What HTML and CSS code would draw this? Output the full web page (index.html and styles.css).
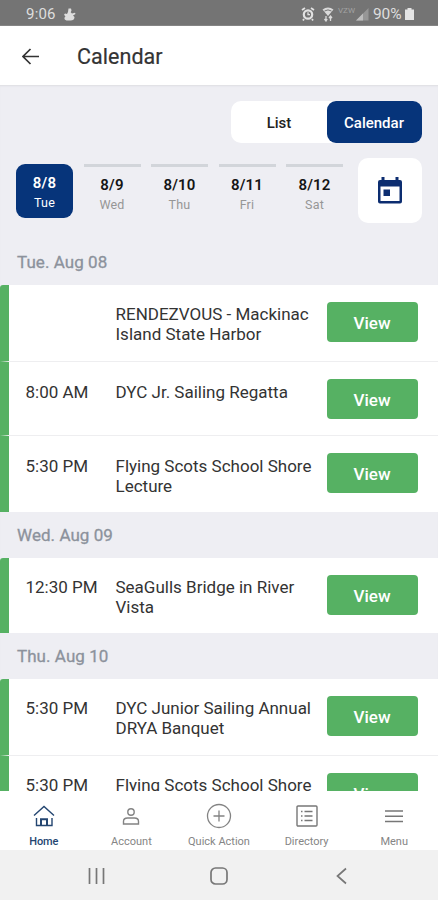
FILE: index.html
```html
<!DOCTYPE html>
<html lang="en">
<head>
<meta charset="utf-8">
<title>Calendar</title>
<link rel="stylesheet" href="styles.css">
</head>
<body>
<div class="status">
  <span class="clock">9:06</span>
  <svg class="snow" width="13" height="13" viewBox="0 0 13 13"><path d="M5.500 0.500h2.500l.5 2-.8 1.800 1.300 1.200 3-.8.5 1.200-2.500 1.600 1.500 1.500c0 2.500-1.500 3.500-4 3.500H4.500C1.500 12.500.5 10 2.500 8.500L1 6.800l1-1.300 2 .5 1-2z" fill="#dedede"/></svg>
  <div class="signals">
    <svg width="14" height="14" viewBox="0 0 14 14" fill="none" stroke="#e2e2e2"><path d="M1 3l3-2M10 1l3 2M3 12l-1 1.500M11 12l1 1.500" stroke-width="1.800"/><circle cx="7" cy="7.500" r="4.200" stroke-width="2.200"/><path d="M7 5.200v2.500h2" stroke-width="1.300"/></svg>
    <svg class="wifi" width="12" height="15" viewBox="0 0 12 15"><path d="M0.500 2.500Q6-1.500 11.500 2.500L6 9z" fill="#dadada"/><path d="M2.500 4Q6 1.800 9.500 4" fill="none" stroke="#777"/><path d="M4 9v5M2.500 12L4 14l1.200-2M8.500 14V9M7 11l1.500-2L10 11" fill="none" stroke="#dadada" stroke-width="1.300"/></svg>
    <span class="carrier">VZW</span>
    <svg class="bars" width="13" height="13" viewBox="0 0 13 13"><path d="M12.500 0v12.500H0z" fill="#969696"/><path d="M7 5.500v7H0z" fill="#bdbdbd"/></svg>
    <span class="pct">90%</span>
    <svg width="9" height="12" viewBox="0 0 9 12"><path d="M2.500 0h4v1.500H9V12H0V1.500h2.500z" fill="#e4e4e4"/></svg>
  </div>
</div>
<header class="header">
  <svg width="18" height="18" viewBox="0 0 18 18" fill="none" stroke="#333" stroke-width="1.700"><path d="M17 8.500H1.500M8.500 1L1 8.500 8.500 16"/></svg>
  <h1>Calendar</h1>
</header>
<main class="main">
  <div class="toggle"><span>List</span><span class="on">Calendar</span></div>
  <div class="days">
    <div class="day active"><b>8/8</b><i>Tue</i></div>
    <div class="day"><b>8/9</b><i>Wed</i></div>
    <div class="day"><b>8/10</b><i>Thu</i></div>
    <div class="day"><b>8/11</b><i>Fri</i></div>
    <div class="day"><b>8/12</b><i>Sat</i></div>
    <div class="picker"><svg width="24" height="27" viewBox="0 0 24 27"><path fill="#0c2d70" fill-rule="evenodd" d="M3.500 0h3v3h11V0h3v3h1.500a2 2 0 0 1 2 2v19.500a2 2 0 0 1-2 2H2a2 2 0 0 1-2-2V5a2 2 0 0 1 2-2h1.500zM2.500 9.500V24h19V9.500zM5.500 12.500h6.500v6.500H5.500z"/></svg></div>
  </div>
  <h2>Tue. Aug 08</h2>
  <div class="group">
    <article class="event"><time></time><p>RENDEZVOUS - Mackinac Island State Harbor</p><button>View</button></article>
    <article class="event short"><time>8:00 AM</time><p>DYC Jr. Sailing Regatta</p><button>View</button></article>
    <article class="event tall"><time>5:30 PM</time><p>Flying Scots School Shore Lecture</p><button>View</button></article>
  </div>
  <h2>Wed. Aug 09</h2>
  <div class="group">
    <article class="event compact"><time>12:30 PM</time><p>SeaGulls Bridge in River Vista</p><button>View</button></article>
  </div>
  <h2>Thu. Aug 10</h2>
  <div class="group">
    <article class="event"><time>5:30 PM</time><p>DYC Junior Sailing Annual DRYA Banquet</p><button>View</button></article>
    <article class="event"><time>5:30 PM</time><p>Flying Scots School Shore Lecture</p><button>View</button></article>
  </div>
</main>
<nav class="tabs">
  <a class="current"><svg width="26" height="26" viewBox="0 0 26 26" fill="none" stroke="#244671" stroke-width="1.400"><path d="M3 12.500L13 3.500l10 9M5.500 15v7.500h15.500V15"/><path d="M10 22.500v-6.300h6v6.300" stroke-width="2"/></svg><span>Home</span></a>
  <a><svg width="26" height="26" viewBox="0 0 26 26" fill="none" stroke="#838383" stroke-width="1.400"><circle cx="13" cy="9" r="3.200"/><path d="M5.500 21v-2.500q0-3.500 4-3.500h7q4 0 4 3.500V21z"/></svg><span>Account</span></a>
  <a><svg width="26" height="26" viewBox="0 0 26 26" fill="none" stroke="#838383" stroke-width="1.300"><circle cx="13" cy="13" r="11.500"/><path d="M13 7.500v11M7.500 13h11"/></svg><span>Quick Action</span></a>
  <a><svg width="26" height="26" viewBox="0 0 26 26" fill="none" stroke="#777" stroke-width="1.400"><rect x="3" y="3" width="20" height="20" rx="1"/><path d="M10.500 8.500h8M10.500 13h8M10.500 17.500h8M7 8.500h1.500M7 13h1.500M7 17.500h1.500"/></svg><span>Directory</span></a>
  <a><svg width="26" height="26" viewBox="0 0 26 26" fill="none" stroke="#777" stroke-width="1.500"><path d="M4 8h18M4 13.300h18M4 18.600h18"/></svg><span>Menu</span></a>
</nav>
<div class="system">
  <svg width="18" height="18" viewBox="0 0 18 18" stroke="#777" stroke-width="1.700"><path d="M1.500 1v16M8.500 1v16M15.500 1v16"/></svg>
  <svg width="18" height="18" viewBox="0 0 18 18" fill="none" stroke="#777" stroke-width="1.700"><rect x="1" y="1" width="16" height="16" rx="4.500"/></svg>
  <svg width="18" height="18" viewBox="0 0 18 18" fill="none" stroke="#777" stroke-width="1.700"><path d="M14 1.500L5.500 9l8.500 7.500"/></svg>
</div>
</body>
</html>
```
FILE: styles.css
```css
* { box-sizing: border-box; }
body {
  margin: 0;
  width: 438px;
  height: 900px;
  overflow: hidden;
  display: flex;
  flex-direction: column;
  font-family: Roboto, sans-serif;
  background: #fff;
  color: #333;
}
svg { display: block; flex: none; }
.status {
  height: 26px;
  flex: none;
  display: flex;
  align-items: center;
  padding: 3px 24px 0 26px;
  background: #747474;
  border-bottom: 1px solid #858585;
  color: #dedede;
  font-size: 15px;
}
.clock { width: 31px; letter-spacing: 0.2px; }
.snow { margin-left: 6px; }
.signals { display: flex; align-items: center; margin-left: auto; }
.wifi { margin-left: 7px; }
.carrier { width: 17px; margin: -7px 0 0 4px; font-size: 8px; color: #a3a3a3; }
.bars { margin-left: 1px; }
.pct { width: 30px; margin: 0 2px 0 4px; font-size: 15.5px; letter-spacing: -0.1px; }
.header {
  height: 59px;
  flex: none;
  display: flex;
  align-items: center;
  padding: 2px 22px 0;
}
h1 { margin: 0 0 0 37px; font-size: 21.5px; font-weight: 400; letter-spacing: 0.05px; -webkit-text-stroke: 0.2px #333; }
.main {
  flex: 1;
  min-height: 0;
  overflow: hidden;
  background: #eeeef3;
  padding-top: 16px;
  box-shadow: inset 0 2px 2px -1px #dedee2;
}
.toggle {
  display: flex;
  width: 191px;
  height: 42px;
  margin-left: 231px;
  border-radius: 10px;
  background: #fff;
  font-size: 15px;
  font-weight: 500;
  line-height: 44px;
  text-align: center;
  color: #222;
}
.toggle span { width: 96px; }
.toggle .on { width: 95px; padding-right: 1px; border-radius: 9px; background: #06347a; color: #fff; }
.days {
  display: flex;
  align-items: center;
  gap: 10.500px;
  height: 65px;
  margin: 15px 16px 0;
}
.day {
  width: 57px;
  height: 54px;
  display: flex;
  flex-direction: column;
  align-items: center;
  padding-top: 9px;
  border-top: 3px solid #d2d5da;
  line-height: 19px;
}
.day b { font-size: 15px; font-weight: 600; letter-spacing: 0.2px; color: #151515; }
.day i { font-size: 12.5px; font-style: normal; letter-spacing: 0.2px; color: #969696; }
.day.active { border: 0; padding-top: 10px; border-radius: 9px; background: #06347a; }
.day.active b, .day.active i { color: #fff; }
.picker {
  width: 64px;
  height: 65px;
  margin-left: auto;
  display: grid;
  place-items: center;
  border-radius: 10px;
  background: #fff;
}
h2 {
  height: 46px;
  margin: 0;
  padding-left: 17px;
  font-size: 17px;
  font-weight: 400;
  letter-spacing: 0.05px;
  line-height: 46px;
  color: #8c929c;
  -webkit-text-stroke: 0.3px #8c929c;
}
.days + h2 { height: 62px; line-height: 78px; }
.event {
  height: 76px;
  display: grid;
  grid-template-columns: 89.5px 205px 91px;
  align-items: start;
  padding: 19px 0 0 17px;
  border-left: 9px solid #56b163;
  background: #fff;
  font-size: 17px;
  line-height: 20px;
}
.event + .event { border-top: 1px solid #eeeef0; }
.event.short { height: 74px; }
.event.tall { height: 77px; }
.event.short, .event.tall { padding-top: 20px; }
.event.compact { height: 75px; }
.event:first-child { border-top-left-radius: 3px; }
.event time { margin-left: -0.5px; }
.event p { margin: 0; }
.event button {
  width: 91px;
  height: 40px;
  margin: -2px 0 0 6px;
  padding: 2px 0 0;
  border: 0;
  border-radius: 4px;
  background: #56b163;
  color: #fff;
  font: 500 17px Roboto, sans-serif;
}
.event.short button, .event.tall button { margin-top: -3px; }
.tabs { height: 59px; flex: none; display: flex; padding-top: 12px; background: #fff; }
.tabs a {
  flex: 1;
  display: flex;
  flex-direction: column;
  align-items: center;
  font-size: 11px;
  color: #858585;
  white-space: nowrap;
}
.tabs span { margin-top: 6px; }
.tabs .current { color: #244671; font-weight: 500; letter-spacing: -0.1px; }
.system {
  height: 50px;
  flex: none;
  display: flex;
  align-items: center;
  justify-content: space-between;
  padding: 2px 88px 0;
  background: #f1f1f1;
}
```
